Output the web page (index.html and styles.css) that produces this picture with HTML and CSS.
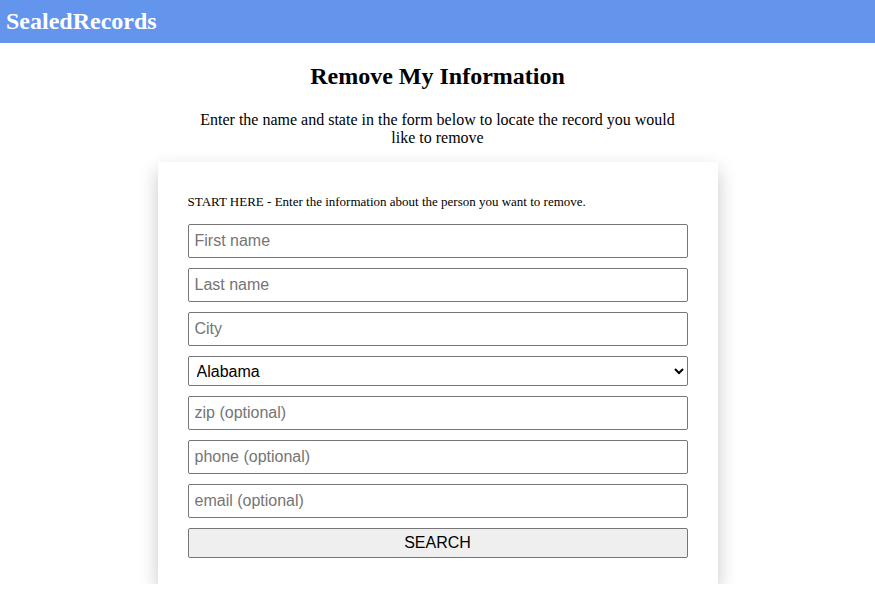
FILE: index.html
```html
<!DOCTYPE html>
<html lang="en">
<head>
  <meta charset="UTF-8">
  <meta name="viewport" content="width=device-width, initial-scale=1.0">
  <title>SealedRecords - Remove My Information</title>
  <link rel="stylesheet" href="styles.css">
</head>
<body>
  <!-- Top bar -->
  <header class="topbar">
    <span class="brand">SealedRecords</span>
  </header>

  <main class="page">
    <h1 class="page-title">Remove My Information</h1>
    <p class="intro">Enter the name and state in the form below to locate the record you would like to remove</p>

    <!-- Search form -->
    <form class="card">
      <p class="card-label">START HERE - Enter the information about the person you want to remove.</p>
      <input class="field" type="text" placeholder="First name">
      <input class="field" type="text" placeholder="Last name">
      <input class="field" type="text" placeholder="City">
      <select class="field select">
        <option>Alabama</option>
        <option>Alaska</option>
        <option>Arizona</option>
        <option>Arkansas</option>
        <option>California</option>
      </select>
      <input class="field" type="text" placeholder="zip (optional)">
      <input class="field" type="text" placeholder="phone (optional)">
      <input class="field" type="text" placeholder="email (optional)">
      <button class="search-btn" type="button">SEARCH</button>
    </form>
  </main>
</body>
</html>
```

FILE: styles.css
```css
html, body {
  margin: 0;
  padding: 0;
}

body {
  font-family: "Liberation Serif", "Times New Roman", serif;
  background-color: #fff;
  color: #000;
}

.topbar {
  background-color: #6495ed;
  height: 43px;
  display: flex;
  align-items: center;
  padding: 0 6px;
}

.brand {
  color: #fff;
  font-weight: bold;
  font-size: 24px;
}

.page {
  display: flex;
  flex-direction: column;
  align-items: center;
}

.page-title {
  font-size: 24px;
  margin: 20px 0 0;
}

.intro {
  font-size: 16px;
  max-width: 485px;
  text-align: center;
  margin: 21px 0 15px;
}

.card {
  width: 500px;
  padding: 30px 30px 26px;
  background: #fff;
  box-shadow: 0 8px 18px rgba(0, 0, 0, 0.22);
  display: flex;
  flex-direction: column;
  gap: 10px;
}

.card-label {
  font-size: 13px;
  margin: 2px 0 4px;
}

.field {
  box-sizing: border-box;
  width: 100%;
  height: 34px;
  margin: 0;
  padding: 0 6px;
  font-family: "Liberation Sans", Arial, sans-serif;
  font-size: 16px;
  border: 1px solid #767676;
  border-radius: 2px;
  background: #fff;
  color: #000;
}

.field::placeholder {
  color: #757575;
}

.field.select {
  height: 30px;
  padding: 0 4px;
}

.search-btn {
  height: 30px;
  margin: 0;
  font-family: "Liberation Sans", Arial, sans-serif;
  font-size: 16px;
  color: #000;
  background-color: #efefef;
  border: 1px solid #767676;
  border-radius: 2px;
}
```
